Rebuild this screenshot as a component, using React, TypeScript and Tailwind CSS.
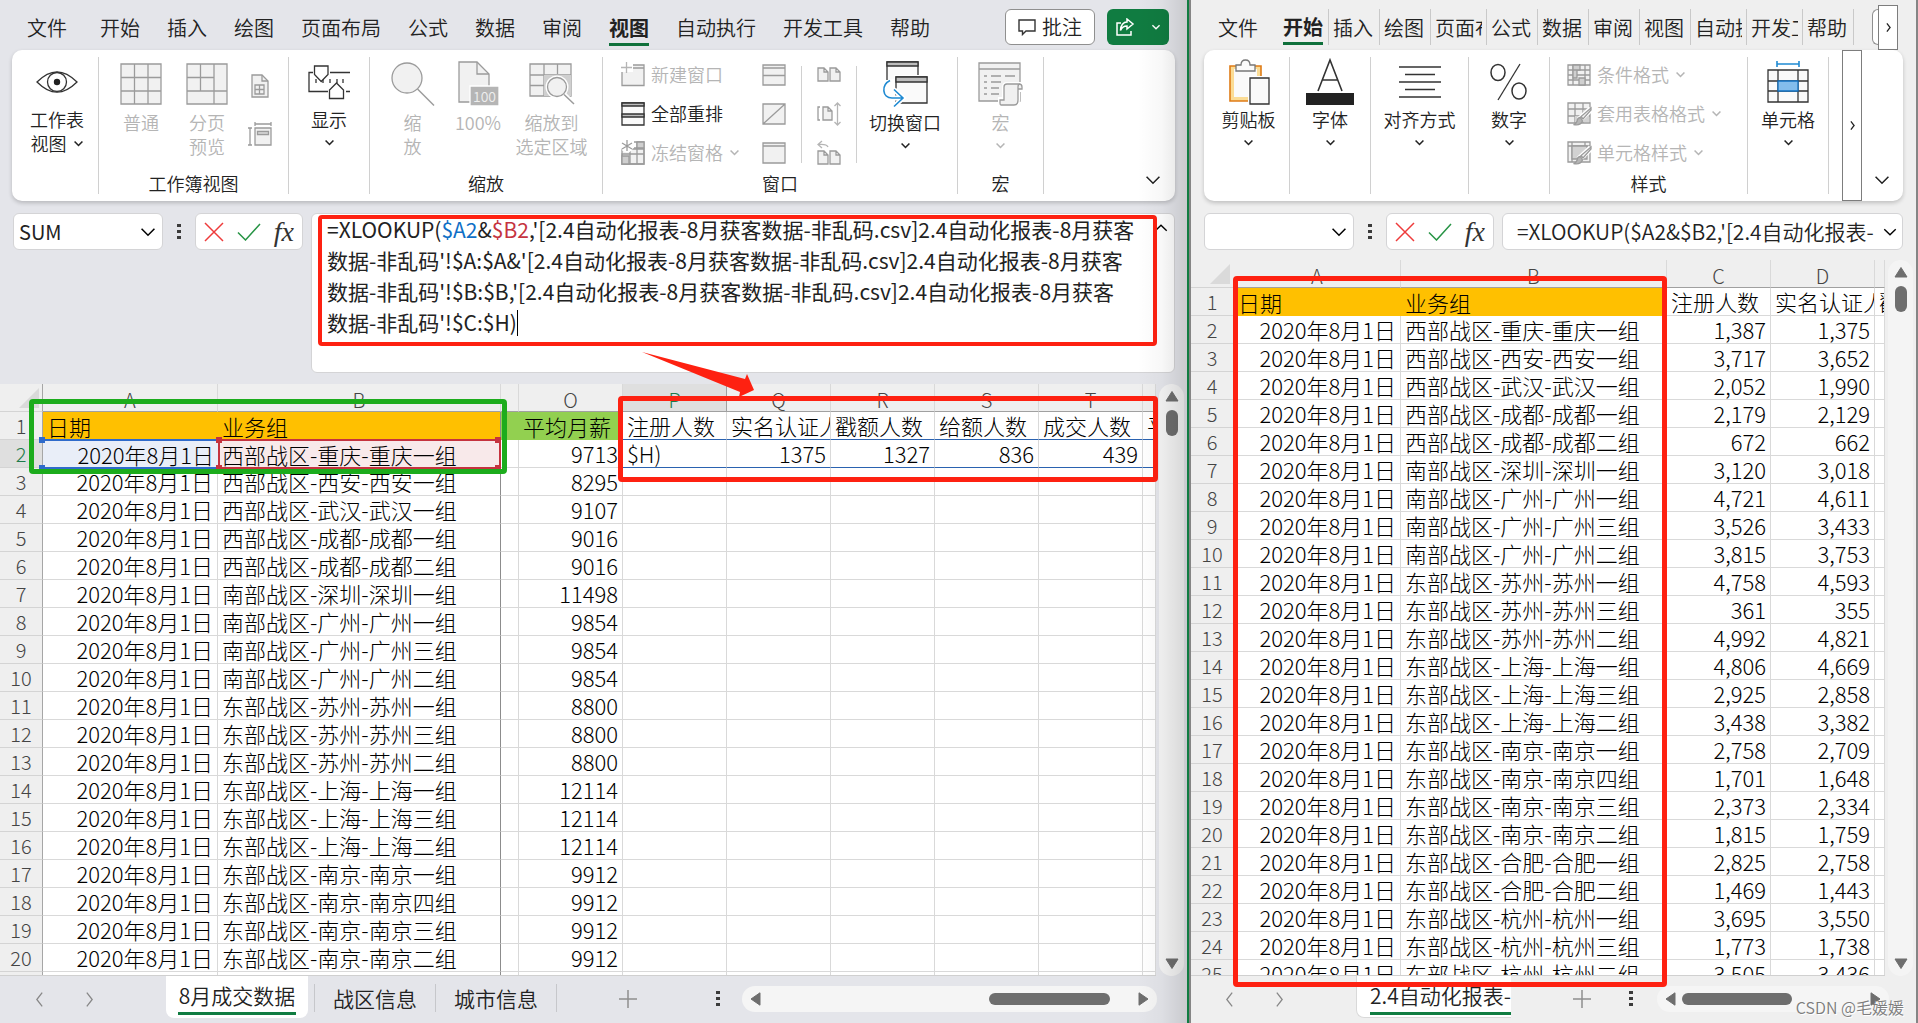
import React from "react";

type Kids = { children?: React.ReactNode };

/* ---------- small glyphs ---------- */

function Chevron({ size = 12, dir = "down", className = "" }: { size?: number; dir?: "down" | "up" | "left" | "right"; className?: string }) {
  const d = { down: "M2 4.5 7 9.5 12 4.5", up: "M2 9.5 7 4.5 12 9.5", left: "M9.5 0.5 4.5 7 9.5 13.5", right: "M4.5 0.5 9.5 7 4.5 13.5" }[dir];
  return (
    <svg width={size} height={size} viewBox="0 0 14 14" className={`shrink-0 overflow-visible ${className}`} fill="none" stroke="currentColor" strokeWidth={size > 13 ? 1.2 : 2}>
      <path d={d} />
    </svg>
  );
}

function Tri({ dir }: { dir: "up" | "down" | "left" | "right" }) {
  const d = {
    up: "M7 1.5 13 11H1Z",
    down: "M7 12.5 13 3H1Z",
    left: "M2 7 11 .8V13.2Z",
    right: "M12 7 3 .8V13.2Z",
  }[dir];
  return (
    <svg width="14" height="14" viewBox="0 0 14 14" className="shrink-0 text-[#6e6e6e]" fill="currentColor" stroke="currentColor" strokeLinejoin="round">
      <path d={d} />
    </svg>
  );
}

function Dots() {
  return (
    <svg width="4" height="16" viewBox="0 0 4 16" fill="#3b3b3b" className="shrink-0">
      <path d="M0 0h4v3H0zM0 6h4v3H0zM0 12h4v3H0z" />
    </svg>
  );
}

function Icon({ w, h, children, stroke = "#9b9b9b", fill = "#f1f1f1" }: Kids & { w: number; h: number; stroke?: string; fill?: string }) {
  return (
    <svg width={w} height={h} viewBox={`0 0 ${w} ${h}`} fill={fill} stroke={stroke} strokeWidth="1.3" className="shrink-0 overflow-visible">
      {children}
    </svg>
  );
}

/* ---------- ribbon icons ---------- */

const EyeIcon = () => (
  <Icon w={42} h={28} stroke="#333" fill="none">
    <path d="M1 14C8 7 14 3.800 21 3.800S34 7 41 14C34 21 28 24.200 21 24.200S8 21 1 14Z" strokeWidth="1.3" />
    <circle cx="21" cy="14" r="9.500" strokeWidth="1.3" />
    <circle cx="21" cy="14" r="3.200" fill="#222" stroke="none" />
  </Icon>
);

const GridIcon = () => (
  <Icon w={42} h={42}>
    <path d="M1 1h40v40H1zM14.500 1v40M28 1v40M1 14.500h40M1 28h40" />
  </Icon>
);

const PageBreakIcon = () => (
  <Icon w={42} h={42}>
    <path d="M1 1h40v40H1zM28 1v40M1 28h40M14.500 1v27M1 14.500h27" />
  </Icon>
);

const PageLayoutIcon = () => (
  <Icon w={18} h={24}>
    <path d="M1 1h10l6 6v16H1z" />
    <path d="M11 1v6h6" fill="none" />
    <path d="M4 11h9v9H4zM8.500 11v9M4 15.500h9" />
  </Icon>
);

const CustomViewIcon = () => (
  <Icon w={24} h={24}>
    <path d="M7 6h16v17H7z" />
    <path d="M9.500 9.500h11v3h-11z" fill="#dcdcdc" />
    <path d="M7 2h16M7 0v4M23 0v4M2 6v17M0 6h4M0 23h4" fill="none" />
  </Icon>
);

const ShowIcon = () => (
  <Icon w={42} h={35} stroke="#333" fill="#fff">
    <path d="M5 7.500H1v19h19M22 7.500h20M38 26.500h4M8 14v4M15 14v4M22 14v4M29 14v4M35 14v4" fill="none" strokeWidth="1.3" />
    <path d="M6.500 1H20v8.500l-6.800 7-6.700-7z" strokeWidth="1.3" />
    <path d="M21.500 33.500v-8.500l7-7 7 7v8.500z" strokeWidth="1.3" />
  </Icon>
);

const ZoomIcon = () => (
  <Icon w={44} h={44}>
    <circle cx="16" cy="16" r="15" />
    <path d="M26.500 27 43 43.500" strokeWidth="1.500" />
  </Icon>
);

const HundredIcon = () => (
  <Icon w={42} h={45}>
    <path d="M2 1h18l12 12v28H2z" />
    <path d="M20 1v12h12" fill="none" />
    <path d="M13 25h29v20H13z" fill="#b5b5b5" stroke="#fff" />
    <text x="27.500" y="40.500" textAnchor="middle" fontSize="14" fill="#eee" stroke="none" fontFamily="Noto Sans CJK SC, sans-serif">100</text>
  </Icon>
);

const ZoomSelIcon = () => (
  <Icon w={46} h={42}>
    <path d="M1 1h41v32H1zM15 1v32M28.500 1v10M1 12h41M1 22.500h14" />
    <path d="M15 12h27v21H15z" fill="#cfcfcf" stroke="none" />
    <circle cx="28" cy="24" r="11.500" fill="#fff" stroke="none" />
    <circle cx="28" cy="24" r="9.500" />
    <path d="M35 31.500 45 41" stroke="#fff" strokeWidth="5" />
    <path d="M35 31.500 45 41" strokeWidth="1.500" />
  </Icon>
);

const NewWindowIcon = () => (
  <Icon w={24} h={24}>
    <path d="M1 9v13.500h22V2H12V9z" stroke="none" />
    <path d="M1 9v13.500h22V2H12M12 5h11" fill="none" />
    <path d="M0 4.500h11M5.500 -1v11" stroke="#b5b5b5" />
  </Icon>
);

const ArrangeIcon = () => (
  <Icon w={24} h={24} stroke="#333" fill="#fafafa">
    <path d="M1 1h22v22H1z" />
    <path d="M1 1h22v3H1zM1 12h22v3H1z" fill="#bdbdbd" />
  </Icon>
);

const FreezeIcon = () => (
  <Icon w={24} h={24}>
    <path d="M1 8h22v15H1z" />
    <path d="M13 1h10v22H1V13h22M13 7h10M9 10v13M16 1v22" fill="none" />
    <path d="M1 15h7v8H1zM16 1h7v6h-7z" fill="#cfcfcf" />
    <circle cx="6" cy="5" r="6.500" fill="#fff" stroke="none" />
    <path d="M6 -1v11M1 2l10 6M11 2 1 8" />
  </Icon>
);

const SplitIcon = () => (
  <Icon w={24} h={22}>
    <path d="M1 1h22v20H1zM1 4h22M1 11.500h22" />
  </Icon>
);
const HideIcon = () => (
  <Icon w={24} h={22}>
    <path d="M1 1h22v20H1zM1 21 23 1" />
  </Icon>
);
const UnhideIcon = () => (
  <Icon w={24} h={22}>
    <path d="M1 1h22v20H1zM1 4h22" />
  </Icon>
);
const pages = "M1 8V1h6l4 4v9H1zM7 1v4h4M13 1h6l4 4v9H13zM19 1v4h4";
const SideBySideIcon = () => (
  <Icon w={24} h={16}>
    <path d={pages} />
  </Icon>
);
const SyncScrollIcon = () => (
  <Icon w={24} h={24}>
    <path d="M6 5h5l4 4v9H6zM11 5v4h4" />
    <path d="M3 5H1v13h2" fill="none" />
    <path d="M20.500 1v22M17.500 4l3-3 3 3M17.500 20l3 3 3-3" fill="none" stroke="#b5b5b5" />
  </Icon>
);
const ResetPosIcon = () => (
  <Icon w={24} h={24}>
    <g transform="translate(0 9)">
      <path d={pages} />
    </g>
    <path d="M11 6C10 3.500 7 3 1.500 3.500M5 0 1 3.500 5 7" fill="none" stroke="#b5b5b5" />
  </Icon>
);

const SwitchIcon = () => (
  <Icon w={45} h={46} stroke="#333" fill="#fafafa">
    <path d="M4 19V1h31v14" strokeWidth="1.3" />
    <path d="M4 1h31v4H4z" fill="#bdbdbd" />
    <path d="M11 14h33v28H11z" fill="#fff" stroke="none" />
    <path d="M13 16h31v26H13z" strokeWidth="1.3" />
    <path d="M13 16h31v5H13z" fill="#bdbdbd" />
    <path d="M8 20C-2 24-1 37 9 37h10M11 28.500l9 8.500-9 8.500" fill="none" stroke="#fff" strokeWidth="5" />
    <path d="M7 19.500C-2 24-1 37 9 37h10M11 28.500l9 8.500-9 8.500" fill="none" stroke="#1f8ad2" strokeWidth="1.600" />
  </Icon>
);

const MacroIcon = () => (
  <Icon w={46} h={44}>
    <path d="M1 1h41v38H1zM1 7h41" />
    <path d="M6 14h3M13 14h10M27 14h10M6 20h3M13 20h10M6 26h3M13 26h8M6 32h3M13 32h8" />
    <path d="M29 22h15v6h-4v10q0 5-4 5H22v-6h4V25q0-3 3-3Z" stroke="#fff" strokeWidth="4" />
    <path d="M29 22h12q3 0 3 3v2h-4v11q0 5-4 5H23q-1 0-1-2v-3h4V25q0-3 3-3ZM40 27v-2q0-3 2-3" />
  </Icon>
);

const ClipboardIcon = () => (
  <Icon w={42} h={46} fill="#fafafa">
    <path d="M2 7h31v35H2z" fill="#fbdc95" stroke="#df7b16" strokeWidth="1.600" />
    <path d="M6 10h23v28H6z" stroke="none" />
    <path d="M8 12V6h5q0-5 4.500-5t4.500 5h5v6z" stroke="#777" />
    <path d="M20 17h23v30H20z" fill="#fff" stroke="none" />
    <path d="M22 19h19v26H22z" stroke="#333" strokeWidth="1.3" />
  </Icon>
);

const FontIcon = () => (
  <Icon w={48} h={46} stroke="#333" fill="none">
    <path d="M12 32 24 1l12 31M16 21h16" strokeWidth="1.600" />
    <path d="M0 34h48v12H0z" fill="#222" stroke="none" />
  </Icon>
);

const AlignIcon = () => (
  <Icon w={42} h={34} stroke="#333">
    <path d="M0 2h42M6 9.500h30M0 17h42M6 24.500h30M0 32h42" />
  </Icon>
);

const PercentIcon = () => (
  <Icon w={38} h={38} stroke="#333" fill="none">
    <ellipse cx="8" cy="9.500" rx="7" ry="8" strokeWidth="1.500" />
    <ellipse cx="29" cy="28" rx="7" ry="8" strokeWidth="1.500" />
    <path d="M30 1 8 37" />
  </Icon>
);

const CondIcon = () => (
  <Icon w={24} h={22}>
    <path d="M1 1h22v20H1zM6 1v20M18 1v20M1 6h22M1 11h22M1 16h22" />
    <path d="M6 1h7v5H6zM6 6h4v8H6zM12 14h6v7h-6z" fill="#cfcfcf" />
  </Icon>
);

const brush = (
  <g>
    <path d="M24 7 12 18" stroke="#fff" strokeWidth="6" />
    <path d="M24 6 14 14.500l2 2.500L24 8z" />
    <path d="M13.500 15.500q-3 0-3.500 4-1 2.500-3.500 3 7 1.500 9-3.500z" fill="#b5b5b5" />
  </g>
);
const TableFmtIcon = () => (
  <Icon w={24} h={23}>
    <path d="M1 1h22v20H1zM8 1v20M16 1v20M1 7h22M1 14h22" />
    <path d="M16 8h6v12h-6zM8 14h8v6H8z" fill="#d2d2d2" stroke="none" />
    {brush}
  </Icon>
);
const CellStyleIcon = () => (
  <Icon w={24} h={23}>
    <path d="M1 1h22v20H1zM5 1v20M1 5h22M18 1v4" />
    <path d="M5 5h15v13H5z" fill="#d2d2d2" />
    {brush}
  </Icon>
);

const CellsIcon = () => (
  <Icon w={42} h={42} stroke="#333" fill="#fafafa">
    <path d="M10 3h22M10 0v6M32 0v6" stroke="#1f8ad2" strokeWidth="1.600" />
    <path d="M1 9h40v32H1zM11 9v32M31 9v32M1 20h40M1 30h40" />
    <path d="M11 20h20v10H11z" fill="#83bdec" stroke="#1270c0" />
  </Icon>
);

/* ---------- ribbon building blocks ---------- */

function Group({ className, label, children }: Kids & { className: string; label?: string }) {
  return (
    <section className={`flex h-full shrink-0 flex-col border-r border-[#d0d0d0] ${className}`}>
      <div className="flex min-h-0 flex-1 justify-center">{children}</div>
      {label && <div className="pt-px text-center leading-[21px]">{label}</div>}
    </section>
  );
}

function Big({ icon, lines, className = "", muted, drop, inlineDrop, low }: { icon: React.ReactNode; lines: string[]; className?: string; muted?: boolean; drop?: boolean; inlineDrop?: boolean; low?: boolean }) {
  return (
    <button type="button" className={`flex flex-col items-center self-start leading-[24px] whitespace-nowrap ${muted ? "text-[#b5b5b5]" : "text-[#222]"} ${className}`}>
      <span className={`flex items-center justify-center ${muted || low ? "h-[53px]" : "h-[50px]"}`}>{icon}</span>
      {lines.map((l, i) => (
        <span key={l} className="flex items-center gap-1.5">
          {l}
          {inlineDrop && i === lines.length - 1 && <Chevron size={11} />}
        </span>
      ))}
      {drop && <Chevron size={11} className="mt-1.5" />}
    </button>
  );
}

function Small({ icon, text, muted = true, drop }: { icon: React.ReactNode; text?: string; muted?: boolean; drop?: boolean }) {
  return (
    <button type="button" aria-label={text ? undefined : "窗口选项"} className={`flex h-[35px] items-center gap-1.5 whitespace-nowrap ${muted ? "text-[#b5b5b5]" : "text-[#222]"}`}>
      {icon}
      {text}
      {drop && <Chevron size={11} />}
    </button>
  );
}

function Ribbon({ children, className }: Kids & { className: string }) {
  return (
    <div className={`flex h-[151px] shrink-0 overflow-hidden rounded-[10px] bg-white text-[18px] text-[#222] shadow-[0_2px_4px_rgba(0,0,0,0.2)] ${className}`}>
      {children}
    </div>
  );
}

function FxButtons({ className }: { className: string }) {
  return (
    <div className={`flex h-[37px] shrink-0 items-center justify-between rounded-md border border-[#d4d4d6] bg-white ${className}`}>
      <button type="button" aria-label="取消">
        <svg width="20" height="20" viewBox="0 0 20 20" stroke="#ee3b3b" strokeWidth="1.500" fill="none"><path d="M1 1l18 18M19 1 1 19" /></svg>
      </button>
      <button type="button" aria-label="输入">
        <svg width="24" height="18" viewBox="0 0 24 18" stroke="#279445" strokeWidth="1.500" fill="none"><path d="M1 9.500 8.500 17 23 1" /></svg>
      </button>
      <button type="button" aria-label="插入函数" className="font-['Liberation_Serif',serif] text-[28px] leading-none font-normal text-[#333] italic">fx</button>
    </div>
  );
}

function NameBox({ value, className }: { value: string; className: string }) {
  return (
    <label className={`flex h-[37px] shrink-0 items-center rounded-md border border-[#d4d4d6] bg-white px-[5px] ${className}`}>
      <input aria-label="名称框" defaultValue={value} className="w-full min-w-0 bg-transparent text-[20px] font-normal text-[#222] outline-none" />
      <Chevron size={18} />
    </label>
  );
}

/* ---------- sheet parts ---------- */

function VScroll() {
  return (
    <div className="flex flex-col items-center justify-between rounded-full bg-[#f4f4f4] py-[6px]">
      <div className="flex flex-col items-center gap-1.5">
        <Tri dir="up" />
        <div className="h-[26px] w-[12px] rounded-full bg-[#6e6e6e]" />
      </div>
      <Tri dir="down" />
    </div>
  );
}

const th = "border-r border-b border-r-[#d9d9d9] border-b-[#a0a0a0] bg-[#efefef] p-0 pt-1 font-light text-[#444]";
const rowTh = "border-r border-b border-r-[#a6a6a6] border-b-[#d4d4d4] p-0 text-center font-light";
const cell = "overflow-hidden border-r border-b p-0 px-1 whitespace-nowrap";
const line = "border-[#d9d9d9]";

const leftGroups = [
  "西部战区-重庆-重庆一组", "西部战区-西安-西安一组", "西部战区-武汉-武汉一组", "西部战区-成都-成都一组",
  "西部战区-成都-成都二组", "南部战区-深圳-深圳一组", "南部战区-广州-广州一组", "南部战区-广州-广州三组",
  "南部战区-广州-广州二组", "东部战区-苏州-苏州一组", "东部战区-苏州-苏州三组", "东部战区-苏州-苏州二组",
  "东部战区-上海-上海一组", "东部战区-上海-上海三组", "东部战区-上海-上海二组", "东部战区-南京-南京一组",
  "东部战区-南京-南京四组", "东部战区-南京-南京三组", "东部战区-南京-南京二组",
];
const salaries = [9713, 8295, 9107, 9016, 9016, 11498, 9854, 9854, 9854, 8800, 8800, 8800, 12114, 12114, 12114, 9912, 9912, 9912, 9912];
const rightGroups = [
  ...leftGroups, "东部战区-合肥-合肥一组", "东部战区-合肥-合肥二组", "东部战区-杭州-杭州一组", "东部战区-杭州-杭州三组", "东部战区-杭州-杭州二组",
];
const regs = ["1,387", "3,717", "2,052", "2,179", "672", "3,120", "4,721", "3,526", "3,815", "4,758", "361", "4,992", "4,806", "2,925", "3,438", "2,758", "1,701", "2,373", "1,815", "2,825", "1,469", "3,695", "1,773", "3,505"];
const auths = ["1,375", "3,652", "1,990", "2,129", "662", "3,018", "4,611", "3,433", "3,753", "4,593", "355", "4,821", "4,669", "2,858", "3,382", "2,709", "1,648", "2,334", "1,759", "2,758", "1,443", "3,550", "1,738", "3,436"];

function Handles({ color, all }: { color: string; all?: boolean }) {
  return (
    <>
      <i className={`absolute -top-1 -left-1 size-[6px] ${color}`} />
      <i className={`absolute -bottom-1 -left-1 size-[6px] ${color}`} />
      {all && <i className={`absolute -top-1 -right-0.5 size-[6px] ${color}`} />}
      {all && <i className={`absolute -right-0.5 -bottom-1 size-[6px] ${color}`} />}
    </>
  );
}

function LeftTable() {
  return (
    <table className="w-full table-fixed border-separate border-spacing-0 bg-white text-[22px] leading-[27px] text-black">
      <colgroup>
        <col className="w-[43px]" /><col className="w-[175px]" /><col className="w-[283px]" /><col className="w-[18px]" />
        <col className="w-[104px]" /><col className="w-[104px]" /><col className="w-[104px]" /><col className="w-[104px]" />
        <col className="w-[104px]" /><col className="w-[104px]" /><col />
      </colgroup>
      <thead>
        <tr className="h-[28px] text-[20px] leading-[23px]">
          <th className="border-r border-b border-r-[#a6a6a6] border-b-[#d4d4d4] bg-[#efefef] p-0">
            <svg width="20" height="20" viewBox="0 0 20 20" className="mr-[3px] ml-auto block"><path d="M20 0v20H0z" fill="#dadada" /></svg>
          </th>
          {["A", "B", "", "O", "P", "Q", "R", "S", "T", ""].map((c, i) => (
            <th key={i} scope="col" className={c === "P" ? "border-r border-b border-r-[#a0a0a0] border-b-[#a0a0a0] bg-[#dfdfdf] p-0 pt-1 font-light text-[#1d7b4b]" : th}>{c}</th>
          ))}
        </tr>
      </thead>
      <tbody>
        <tr className="h-[28px]">
          <th scope="row" className={`${rowTh} bg-[#efefef] text-[20px] text-[#444]`}>1</th>
          <td className="bg-[#ffc000] p-0 px-1">日期</td>
          <td className="border-r border-[#8c8c8c] bg-[#ffc000] p-0 px-1">业务组</td>
          <td className="bg-[#92d050] p-0" />
          <td className="overflow-hidden bg-[#92d050] p-0 px-1 whitespace-nowrap">平均月薪</td>
          {["注册人数", "实名认证人数", "戳额人数", "给额人数", "成交人数", "平均月薪"].map((t) => (
            <td key={t} className={`${cell} border-r-[#d9d9d9] border-b-[#2a62b0]`}>{t}</td>
          ))}
        </tr>
        {[...leftGroups, ""].map((g, i) => (
          <tr key={i} className="h-[28px]">
            <th scope="row" className={`${rowTh} text-[20px] ${i === 0 ? "bg-[#dfdfdf] text-[#1d7b4b]" : "bg-[#efefef] text-[#444]"}`}>{g && i + 2}</th>
            <td className={i === 0 ? "relative bg-[#e9eef8] p-0 px-1 text-right whitespace-nowrap" : `${cell} ${line} text-right`}>
              {g && "2020年8月1日"}
              {i === 0 && <span className="absolute inset-x-0 -top-px -bottom-px border-y-2 border-[#2f6bcb]"><Handles color="bg-[#2f6bcb]" /></span>}
            </td>
            <td className={i === 0 ? "relative bg-[#f8e9ea] p-0 px-1 whitespace-nowrap" : `${cell} border-r-[#8c8c8c] border-b-[#d9d9d9]`}>
              {g}
              {i === 0 && <span className="absolute inset-x-0 -top-px -bottom-px border-2 border-[#c5333f]"><Handles color="bg-[#c5333f]" all /></span>}
            </td>
            <td className={`${cell} ${line}`} />
            <td className={`${cell} ${line} text-right`}>{g && salaries[i]}</td>
            {(i === 0 ? ["$H)", "1375", "1327", "836", "439", ""] : ["", "", "", "", "", ""]).map((v, k) => (
              <td key={k} className={`${cell} ${k ? "text-right" : ""} ${i === 0 ? "border-r-[#d9d9d9] border-b-[#2a62b0]" : line}`}>{v}</td>
            ))}
          </tr>
        ))}
      </tbody>
    </table>
  );
}

function RightTable() {
  return (
    <table className="w-full table-fixed border-separate border-spacing-0 bg-white text-[22px] leading-[27px] text-black">
      <colgroup>
        <col className="w-[43px]" /><col className="w-[167px]" /><col className="w-[266px]" /><col className="w-[104px]" /><col className="w-[104px]" /><col />
      </colgroup>
      <thead>
        <tr className="h-[28px] text-[20px] leading-[23px]">
          <th className="border-b border-[#d4d4d4] bg-[#efefef] p-0">
            <svg width="20" height="20" viewBox="0 0 20 20" className="mr-1 ml-auto block"><path d="M20 0v20H0z" fill="#dadada" /></svg>
          </th>
          {["A", "B", "C", "D", ""].map((c, i) => <th key={i} scope="col" className={th}>{c}</th>)}
        </tr>
      </thead>
      <tbody>
        <tr className="h-[28px]">
          <th scope="row" className={`${rowTh} bg-[#efefef] text-[20px] text-[#444]`}>1</th>
          <td className="bg-[#ffc000] p-0 px-1">日期</td>
          <td className="bg-[#ffc000] p-0 px-1">业务组</td>
          {["注册人数", "实名认证人数", "戳额人数"].map((t) => <td key={t} className={`${cell} ${line}`}>{t}</td>)}
        </tr>
        {rightGroups.map((g, i) => (
          <tr key={i} className="h-[28px]">
            <th scope="row" className={`${rowTh} bg-[#efefef] text-[20px] text-[#444]`}>{i + 2}</th>
            <td className={`${cell} ${line} text-right`}>2020年8月1日</td>
            <td className={`${cell} ${line}`}>{g}</td>
            <td className={`${cell} ${line} text-right`}>{regs[i]}</td>
            <td className={`${cell} ${line} text-right`}>{auths[i]}</td>
            <td className={`${cell} ${line}`} />
          </tr>
        ))}
      </tbody>
    </table>
  );
}

function Tab({ name, active }: { name: string; active?: boolean }) {
  return (
    <button type="button" className={`border-b-[3px] pb-px leading-[28px] ${active ? "border-[#0f703b] font-bold" : "border-transparent"}`}>{name}</button>
  );
}

/* ---------- left workbook ---------- */

function LeftWindow() {
  return (
    <section className="relative flex min-w-0 flex-col overflow-hidden border-r-2 border-[#107c41] bg-[#e4e5ea]">
      <header className="flex h-[50px] shrink-0 items-start pt-[9px] pr-[18px] pl-[27px] text-[20px] text-[#222]">
        <nav className="flex gap-[27px] pt-[5px] whitespace-nowrap">
          <span className="mr-1.5 flex"><Tab name="文件" /></span>
          {["开始", "插入", "绘图", "页面布局", "公式", "数据", "审阅", "视图", "自动执行", "开发工具", "帮助"].map((t) => (
            <Tab key={t} name={t} active={t === "视图"} />
          ))}
        </nav>
        <button type="button" className="ml-auto flex h-[36px] w-[90px] shrink-0 items-center justify-center gap-1.5 rounded-md border border-[#8f8f8f] bg-white">
          <svg width="18" height="18" viewBox="0 0 18 18" fill="none" stroke="#333" strokeWidth="1.400"><path d="M1 2h16v11H8l-3.500 3.500V13H1z" /></svg>
          批注
        </button>
        <button type="button" aria-label="共享" className="ml-3 flex h-[36px] w-[62px] shrink-0 items-center justify-center gap-4 rounded-md bg-[#107c41] text-white">
          <svg width="19" height="18" viewBox="0 0 19 18" fill="none" stroke="currentColor" strokeWidth="1.500"><path d="M5 5H1v12h14v-4M11 1l6 5-6 5V8C7 8 5.500 10 4.500 12.500 4.500 7 7.500 4 11 4z" /></svg>
          <Chevron size={10} />
        </button>
      </header>

      <Ribbon className="mx-3 py-[7px]">
        <Group className="w-[87px]">
          <Big icon={<EyeIcon />} lines={["工作表", "视图"]} inlineDrop className="pl-1" />
        </Group>
        <Group className="w-[190px]" label="工作簿视图">
          <Big icon={<GridIcon />} lines={["普通"]} muted className="w-[67px]" />
          <Big icon={<PageBreakIcon />} lines={["分页", "预览"]} muted className="w-[65px]" />
          <div className="flex w-[40px] flex-col items-center gap-6 pt-[17px]">
            <PageLayoutIcon />
            <CustomViewIcon />
          </div>
        </Group>
        <Group className="w-[81px]">
          <Big icon={<ShowIcon />} lines={["显示"]} drop />
        </Group>
        <Group className="w-[233px]" label="缩放">
          <Big icon={<ZoomIcon />} lines={["缩", "放"]} muted className="w-[64px]" />
          <Big icon={<HundredIcon />} lines={["100%"]} muted className="w-[67px]" />
          <Big icon={<ZoomSelIcon />} lines={["缩放到", "选定区域"]} muted className="w-[80px]" />
        </Group>
        <Group className="w-[355px]" label="窗口">
          <div className="flex w-full pl-[18px]">
            <div className="flex w-[141px] flex-col items-start gap-1">
              <Small icon={<NewWindowIcon />} text="新建窗口" />
              <Small icon={<ArrangeIcon />} text="全部重排" muted={false} />
              <Small icon={<FreezeIcon />} text="冻结窗格" drop />
            </div>
            <div className="my-[9px] flex w-[40px] flex-col border-r border-[#d0d0d0]">
              <div className="-my-[9px] flex flex-col gap-1">
                <Small icon={<SplitIcon />} />
                <Small icon={<HideIcon />} />
                <Small icon={<UnhideIcon />} />
              </div>
            </div>
            <div className="my-[9px] flex w-[55px] flex-col items-center border-r border-[#d0d0d0]">
              <div className="-my-[9px] flex flex-col gap-1">
                <Small icon={<SideBySideIcon />} />
                <Small icon={<SyncScrollIcon />} />
                <Small icon={<ResetPosIcon />} />
              </div>
            </div>
            <Big icon={<SwitchIcon />} lines={["切换窗口"]} drop low className="w-[96px]" />
          </div>
        </Group>
        <Group className="w-[86px]" label="宏">
          <Big icon={<MacroIcon />} lines={["宏"]} muted drop />
        </Group>
        <button type="button" aria-label="折叠功能区" className="mr-[13px] mb-[5px] ml-auto self-end"><Chevron size={18} /></button>
      </Ribbon>

      <div className="mt-3 flex shrink-0 items-start pr-3 pl-[13px]">
        <NameBox value="SUM" className="w-[150px]" />
        <div className="flex h-[37px] w-[32px] items-center justify-center"><Dots /></div>
        <FxButtons className="w-[108px] px-2" />
        <div className="relative ml-2 h-[160px] min-w-0 flex-1 rounded-md border border-[#d4d4d6] bg-white">
          <div role="textbox" aria-label="编辑栏" className="overflow-hidden pl-[15px] text-[21px] leading-[31px] font-normal whitespace-nowrap text-[#222]">
            <p>=XLOOKUP(<span className="text-[#0f6fc6]">$A2</span>&amp;<span className="text-[#c5333f]">$B2</span>,'[2.4自动化报表-8月获客数据-非乱码.csv]2.4自动化报表-8月获客</p>
            <p>数据-非乱码'!$A:$A&amp;'[2.4自动化报表-8月获客数据-非乱码.csv]2.4自动化报表-8月获客</p>
            <p>数据-非乱码'!$B:$B,'[2.4自动化报表-8月获客数据-非乱码.csv]2.4自动化报表-8月获客</p>
            <p className="flex items-center">数据-非乱码'!$C:$H)<span className="h-[26px] w-px bg-black" /></p>
          </div>
          <button type="button" aria-label="折叠编辑栏" className="absolute top-[6px] right-[5px]"><Chevron size={16} dir="up" /></button>
          <div className="pointer-events-none absolute top-px right-[17px] left-[6px] h-[131px] rounded border-4 border-[#fe2111]" />
          <svg className="pointer-events-none absolute top-[136px] left-[329px] z-10" width="116" height="50" viewBox="0 0 116 50" fill="#fe2111">
            <path d="M1 2 104 29 106 24 113 40 98 47 99 42Z" />
          </svg>
        </div>
      </div>

      <div className="relative mt-[11px] flex min-h-0 flex-1">
        <div className="min-w-0 flex-1 overflow-hidden border-b border-[#d0d0d0] font-light"><LeftTable /></div>
        <div className="mx-[3px] flex w-[25px] flex-col [&>*]:flex-1"><VScroll /></div>
        <div className="pointer-events-none absolute top-[15px] left-[29px] h-[75px] w-[478px] rounded border-[5px] border-[#1cac1c]" />
        <div className="pointer-events-none absolute top-[12px] right-[29px] left-[618px] h-[86px] rounded border-[5px] border-[#fe2111]" />
      </div>

      <footer className="flex h-[47px] shrink-0 items-start pr-[30px] text-[21px] text-[#222]">
        <div className="flex h-[46px] w-[166px] items-center gap-[35px] pl-[32px] text-[#888]">
          <Chevron size={15} dir="left" />
          <Chevron size={15} dir="right" />
        </div>
        <button type="button" className="h-[42px] w-[142px] rounded-b-lg bg-white px-3 whitespace-nowrap"><span className="block border-b-[3px] border-[#107c41] leading-[33px]">8月成交数据</span></button>
        <button type="button" className="mt-2 ml-[6px] w-[122px] border-x border-[#c6c7cb] leading-[28px]">战区信息</button>
        <button type="button" className="mt-2 w-[121px] border-r border-[#c6c7cb] leading-[28px]">城市信息</button>
        <div className="flex h-[46px] flex-1 items-center justify-end">
          <svg width="18" height="18" viewBox="0 0 18 18" stroke="#8f8f8f" strokeWidth="1.500" className="mr-[79px]"><path d="M9 0v18M0 9h18" /></svg>
          <Dots />
        </div>
        <div className="mt-[10px] ml-[22px] flex h-[26px] w-[415px] items-center rounded-full bg-[#f5f5f5] px-[7px]">
          <Tri dir="left" />
          <div className="mr-[26px] ml-auto h-[12px] w-[121px] rounded-full bg-[#6e6e6e]" />
          <Tri dir="right" />
        </div>
      </footer>
      <div className="pointer-events-none absolute inset-y-0 right-0 w-[50px] bg-linear-to-r from-transparent via-black/3 to-black/12" />
    </section>
  );
}

/* ---------- right workbook ---------- */

function RightWindow() {
  const cut = "overflow-hidden border-r border-[#c9c9c9] pl-[4px] h-[36px] leading-[38px] text-left whitespace-nowrap";
  return (
    <section className="flex min-w-0 flex-col overflow-hidden border-x-2 border-[#858585] bg-[#efefef]">
      <header className="flex h-[50px] shrink-0 items-start overflow-hidden pl-[27px] text-[20px] text-[#222]">
        <div className="mt-[14px] flex w-[65px] shrink-0"><Tab name="文件" /></div>
        <div className="mt-[9px] flex h-[36px] w-[46px] shrink-0 items-end border-r border-[#c9c9c9]"><Tab name="开始" active /></div>
        {["插入", "绘图"].map((t) => <button type="button" key={t} className={`mt-[9px] w-[51px] shrink-0 ${cut}`}>{t}</button>)}
        <button type="button" className={`mt-[9px] w-[56px] shrink-0 ${cut}`}><span className="block w-[47px] overflow-hidden">页面布局</span></button>
        {["公式", "数据", "审阅", "视图"].map((t) => <button type="button" key={t} className={`mt-[9px] w-[51px] shrink-0 ${cut}`}>{t}</button>)}
        {["自动执行", "开发工具"].map((t) => <button type="button" key={t} className={`mt-[9px] w-[56px] shrink-0 ${cut}`}><span className="block w-[47px] overflow-hidden">{t}</span></button>)}
        <button type="button" className={`mt-[9px] w-[51px] shrink-0 ${cut}`}>帮助</button>
        <div className="mt-[9px] ml-[18px] h-[36px] w-[6px] shrink-0 rounded-l-md border border-r-0 border-[#8f8f8f] bg-white" />
        <button type="button" aria-label="更多选项卡" className="mt-[5px] flex h-[45px] w-[20px] shrink-0 items-center justify-center border border-[#7d7d7d] bg-white"><Chevron size={9} dir="right" /></button>
      </header>

      <Ribbon className="mx-[13px]">
        <div className="flex h-full py-[7px]">
          <Group className="w-[86px]"><Big icon={<ClipboardIcon />} lines={["剪贴板"]} drop className="pl-1" /></Group>
          <Group className="w-[81px]"><Big icon={<FontIcon />} lines={["字体"]} drop /></Group>
          <Group className="w-[98px]"><Big icon={<AlignIcon />} lines={["对齐方式"]} drop /></Group>
          <Group className="w-[81px]"><Big icon={<PercentIcon />} lines={["数字"]} drop /></Group>
          <Group className="w-[198px]" label="样式">
            <div className="flex w-full flex-col items-start gap-1 pl-[17px]">
              <Small icon={<CondIcon />} text="条件格式" drop />
              <Small icon={<TableFmtIcon />} text="套用表格格式" drop />
              <Small icon={<CellStyleIcon />} text="单元格样式" drop />
            </div>
          </Group>
          <Group className="w-[81px]"><Big icon={<CellsIcon />} lines={["单元格"]} drop /></Group>
        </div>
        <button type="button" aria-label="更多命令" className="ml-[13px] flex h-full w-[20px] shrink-0 items-center justify-center border border-[#7d7d7d] bg-white"><Chevron size={9} dir="right" /></button>
        <button type="button" aria-label="折叠功能区" className="mr-[12px] mb-[12px] ml-auto self-end"><Chevron size={18} /></button>
      </Ribbon>

      <div className="mt-3 flex shrink-0 items-center px-[13px]">
        <NameBox value="" className="w-[150px]" />
        <div className="flex w-[32px] items-center justify-center"><Dots /></div>
        <FxButtons className="w-[108px] px-2" />
        <label className="ml-2 flex h-[37px] min-w-0 flex-1 items-center rounded-md border border-[#d4d4d6] bg-white pr-1 pl-[14px]">
          <input aria-label="编辑栏" readOnly value="=XLOOKUP($A2&$B2,'[2.4自动化报表-" className="min-w-0 flex-1 bg-transparent text-[21px] text-[#222] outline-none" />
          <Chevron size={16} />
        </label>
      </div>

      <div className="relative mt-[10px] flex min-h-0 flex-1">
        <div className="min-w-0 flex-1 overflow-hidden border-b border-[#d0d0d0] font-light"><RightTable /></div>
        <div className="mr-[3px] ml-[3px] flex w-[25px] flex-col [&>*]:flex-1"><VScroll /></div>
        <div className="pointer-events-none absolute top-[16px] -bottom-[11px] left-[42px] z-10 w-[434px] rounded border-[5px] border-[#fe2111]" />
      </div>

      <footer className="relative flex h-[47px] shrink-0 items-start pr-[27px] text-[21px] text-[#222]">
        <div className="flex h-[46px] w-[165px] shrink-0 items-center gap-[35px] pl-[31px] text-[#888]">
          <Chevron size={15} dir="left" />
          <Chevron size={15} dir="right" />
        </div>
        <button type="button" className="h-[42px] w-[155px] shrink-0 overflow-hidden rounded-bl-lg border-b border-l border-[#d9d9d9] bg-white pl-[13px] text-left whitespace-nowrap"><span className="block border-b-[3px] border-[#107c41] leading-[33px]">2.4自动化报表-</span></button>
        <div className="flex h-[46px] flex-1 items-center justify-end">
          <svg width="18" height="18" viewBox="0 0 18 18" stroke="#8f8f8f" strokeWidth="1.500" className="mr-[38px]"><path d="M9 0v18M0 9h18" /></svg>
          <Dots />
        </div>
        <div className="mt-[10px] ml-[24px] flex h-[26px] w-[232px] shrink-0 items-center rounded-full bg-[#f5f5f5] px-[7px]">
          <Tri dir="left" />
          <div className="mr-auto ml-1 h-[12px] w-[110px] rounded-full bg-[#6e6e6e]" />
          <Tri dir="right" />
        </div>
        <span className="absolute right-[12px] bottom-1 text-[16px] leading-[24px] text-[#7d7d7d] [text-shadow:1px_1px_0_#fff]">CSDN @毛媛媛</span>
      </footer>
    </section>
  );
}

export default function App() {
  return (
    <main className="grid h-screen grid-cols-[1189fr_729fr] overflow-hidden font-['Noto_Sans_CJK_SC',sans-serif] font-[350]">
      <LeftWindow />
      <RightWindow />
    </main>
  );
}
